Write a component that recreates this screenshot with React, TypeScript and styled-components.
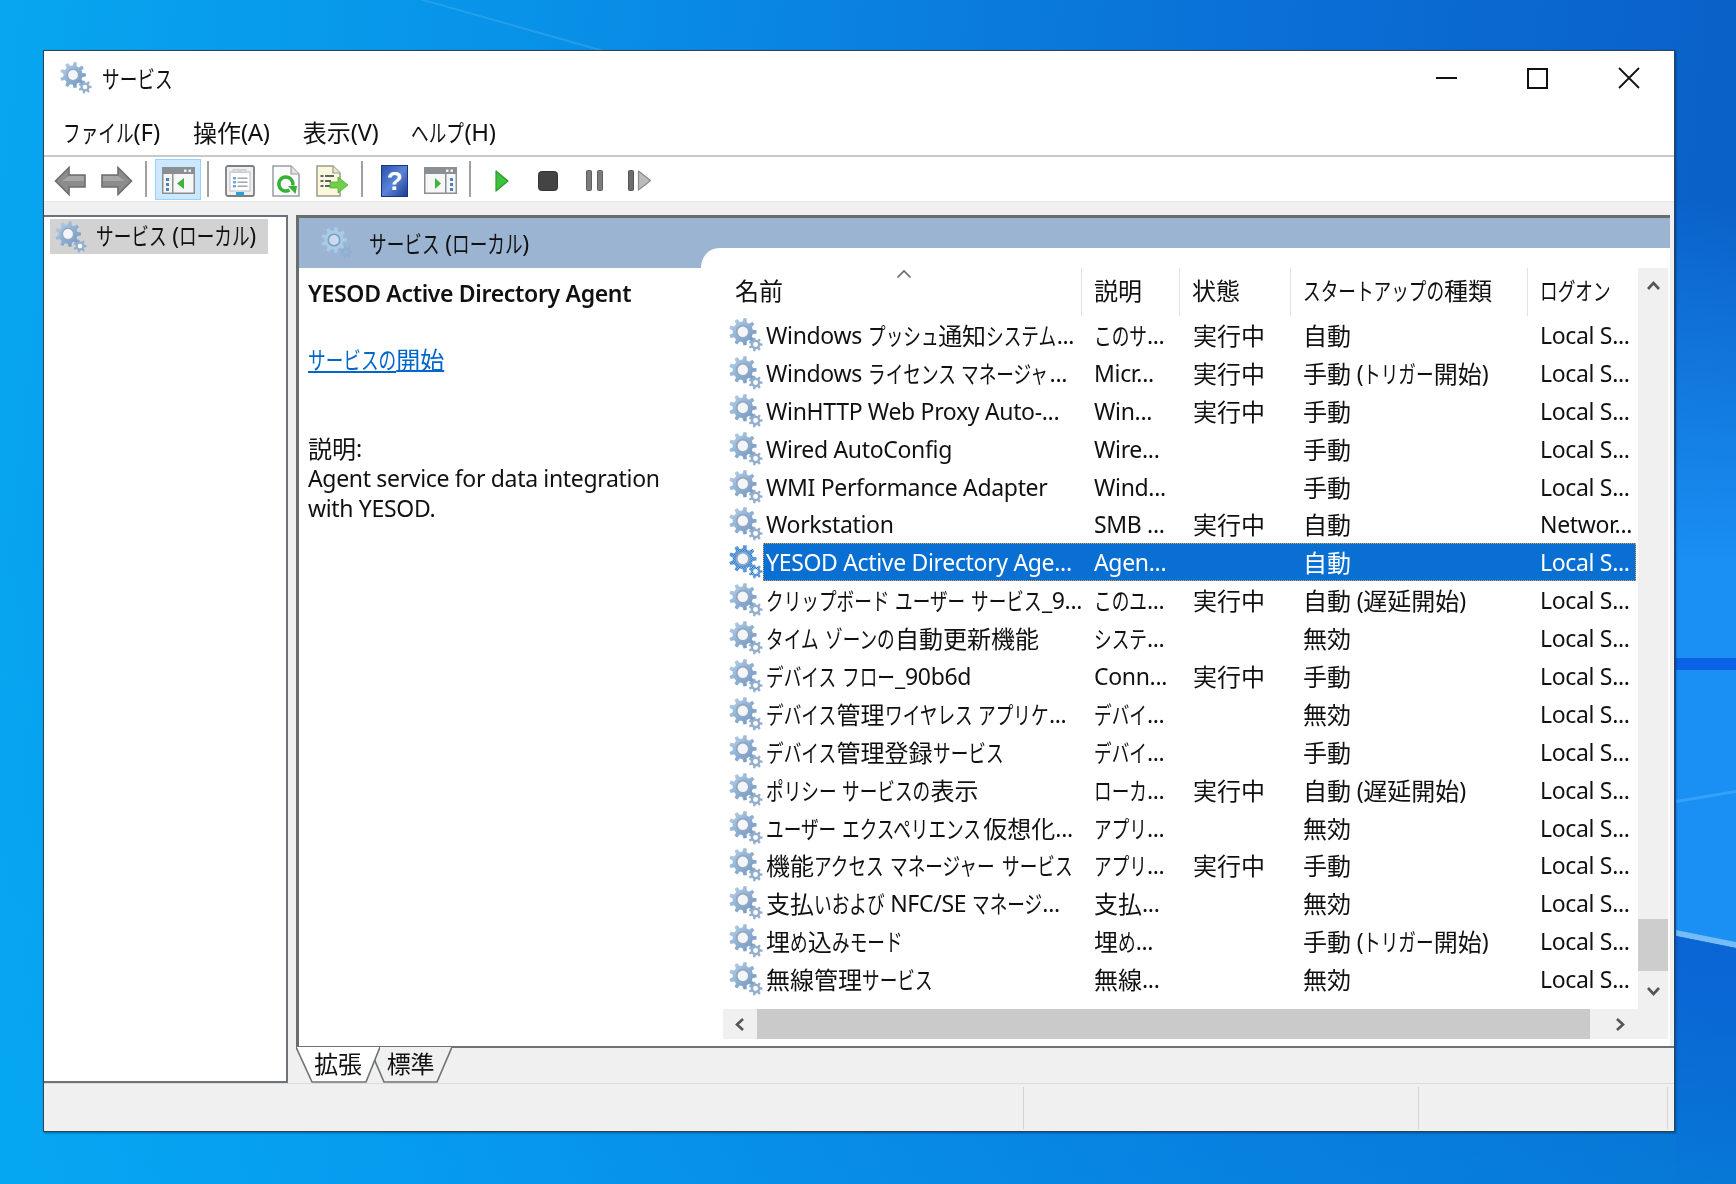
import React from 'react'
import styled, { createGlobalStyle } from 'styled-components'

const GlobalStyle = createGlobalStyle`
  html, body {
    margin: 0;
    padding: 0;
    height: 100%;
  }
  body {
    font-family: "Noto Sans", "Noto Sans CJK JP", sans-serif;
    font-size: 23px;
    letter-spacing: -0.33px;
    color: #111;
    overflow: hidden;
  }
`

const Desktop = styled.div`
  position: relative;
  width: 1736px;
  height: 1184px;
  padding: 50px 0 0 43px;
  box-sizing: border-box;
  overflow: hidden;
  background:
    linear-gradient(180deg, rgba(0, 180, 255, 0) 45%, rgba(0, 180, 255, 0.3) 100%),
    linear-gradient(96deg, #07a6f0 0%, #0892e8 28%, #0a7ede 50%, #0a6ed6 70%, #0a5ec4 100%);
`

const Wallpaper = styled.svg`
  position: absolute;
  inset: 0;
`

const Window = styled.div`
  position: relative;
  width: 1632px;
  height: 1082px;
  box-sizing: border-box;
  display: flex;
  flex-direction: column;
  background: #fff;
  border: 1px solid #2f4352;
  box-shadow: 1px 1px 2px rgba(0, 20, 60, 0.45);
  filter: blur(0.55px);
`

const TitleBar = styled.div`
  height: 56px;
  flex: none;
  display: flex;
  align-items: center;
  gap: 10px;
  padding: 0 0 2px 16px;
  box-sizing: border-box;
  font-size: 24px;
`

const TitleText = styled.span`
  flex: 1;
  padding-bottom: 2px;
`

const Caption = styled.div`
  display: flex;
  align-items: center;
`

const CaptionButton = styled.div`
  width: 91px;
  height: 44px;
  display: flex;
  align-items: center;
  justify-content: center;
`

const MenuBar = styled.div`
  flex: none;
  height: 50px;
  display: flex;
  align-items: center;
  gap: 33px;
  padding: 0 0 0 19px;
  box-sizing: border-box;
  border-bottom: 2px solid #c9c9c9;
`

const MenuItem = styled.span`
  font-size: 24px;
`

const Toolbar = styled.div`
  height: 44px;
  flex: none;
  display: flex;
  align-items: center;
  padding-left: 3px;
  border-bottom: 1px solid #e6e6e6;
`

const ToolButton = styled.div<{ $active?: boolean }>`
  width: 46px;
  height: 41px;
  box-sizing: border-box;
  padding-top: 3px;
  display: flex;
  align-items: center;
  justify-content: center;
  background: ${(p) => (p.$active ? '#cce8ff' : 'transparent')};
  border: 1px solid ${(p) => (p.$active ? '#99d1ff' : 'transparent')};
`

const ToolSep = styled.div`
  width: 2px;
  height: 36px;
  margin: 0 8px 0 6px;
  background: #a0a0a0;
`

const Main = styled.div`
  flex: 1;
  min-height: 0;
  display: flex;
  gap: 8px;
  padding-top: 13px;
  background: #f0f0f0;
`

const TreePane = styled.div`
  width: 244px;
  box-sizing: border-box;
  padding: 2px 18px 0 6px;
  background: #fff;
  border: solid #6d7378;
  border-width: 2px 2px 2px 0;
`

const TreeItem = styled.div`
  height: 35px;
  display: flex;
  align-items: center;
  gap: 9px;
  padding-left: 5px;
  white-space: nowrap;
  background: #d2d2d2;
`

const TreeLabel = styled.span`
  padding-bottom: 4px;
`

const RightColumn = styled.div`
  flex: 1;
  min-width: 0;
  display: flex;
  flex-direction: column;
`

const ContentPane = styled.div`
  flex: 1;
  min-height: 0;
  display: flex;
  margin-right: 4px;
  border: solid #6a6d70;
  border-width: 3px 0 0 3px;
`

const Details = styled.div`
  width: 402px;
  flex: none;
  background: #fff;
`

const DetailsHeader = styled.div`
  height: 50px;
  display: flex;
  align-items: center;
  gap: 16px;
  padding-left: 22px;
  white-space: nowrap;
  box-sizing: border-box;
  background: #9bb4d2;
`

const DetailsBody = styled.div`
  padding: 10px 12px 0 9px;
  line-height: 30px;
`

const ServiceName = styled.div`
  font-weight: 600;
  margin-bottom: 36px;
`

const StartLink = styled.a`
  color: #0066cc;
  text-decoration: underline;
  display: block;
  margin-bottom: 59px;
`

const ListColumn = styled.div`
  flex: 1;
  min-width: 0;
  display: flex;
  background: linear-gradient(#9bb4d2 50px, #fff 50px);
`

const ListPanel = styled.div`
  flex: 1;
  min-width: 0;
  margin-top: 30px;
  padding: 20px 2px 7px 22px;
  background: #fff;
  border-top-left-radius: 18px 20px;
  display: grid;
  grid-template-columns: 1fr 30px;
  grid-template-rows: 1fr 30px;
`

const Table = styled.div`
  min-width: 0;
  overflow: hidden;
`

const HeaderRow = styled.div`
  height: 48px;
  display: grid;
  grid-template-columns: 359px 98px 111px 237px 1fr;
`

const HeaderCell = styled.div`
  position: relative;
  display: flex;
  align-items: center;
  padding: 0 0 4px 12px;
  white-space: nowrap;
  border-right: 1px solid #e2e2e2;
  &:last-child {
    border-right: 0;
  }
`

const SortCaret = styled.svg`
  position: absolute;
  left: 173px;
  top: 1px;
`

const Row = styled.div`
  height: 37.9px;
  display: flex;
  align-items: center;
`

const RowIcon = styled.div`
  width: 40px;
  flex: none;
  display: flex;
  justify-content: flex-end;
`

const Cells = styled.div<{ $selected?: boolean }>`
  flex: none;
  width: 873px;
  height: 100%;
  box-sizing: border-box;
  display: grid;
  grid-template-columns: 328px 99px 110px 237px 1fr;
  align-items: center;
  white-space: nowrap;
  background: ${(p) => (p.$selected ? '#0a6fd2' : 'transparent')};
  color: ${(p) => (p.$selected ? '#fff' : 'inherit')};
  outline: ${(p) => (p.$selected ? '1px dotted #e8a040' : 'none')};
  outline-offset: -1px;
`

const Cell = styled.span`
  padding-left: 3px;
  overflow: hidden;
`

const VScroll = styled.div`
  background: #f0f0f0;
  display: flex;
  flex-direction: column;
  align-items: center;
`

const VThumbSpace = styled.div`
  flex: 1;
  width: 100%;
  display: flex;
  flex-direction: column;
  justify-content: flex-end;
  padding-bottom: 2px;
  box-sizing: border-box;
`

const VThumb = styled.div`
  height: 52px;
  background: #cdcdcd;
`

const ScrollArrow = styled.div`
  width: 30px;
  height: 36px;
  flex: none;
  display: flex;
  align-items: center;
  justify-content: center;
`

const HScroll = styled.div`
  background: #f0f0f0;
  display: flex;
  align-items: center;
`

const HThumb = styled.div`
  flex: 1;
  height: 100%;
  background: #cacaca;
`

const HArrowLeft = styled.div`
  width: 34px;
  height: 100%;
  flex: none;
  display: flex;
  align-items: center;
  justify-content: center;
`

const HArrowRight = styled(HArrowLeft)`
  width: 48px;
  padding-left: 10px;
  box-sizing: border-box;
`

const Corner = styled.div`
  background: #f0f0f0;
`

const TabStrip = styled.div`
  height: 37px;
  flex: none;
  display: flex;
  border-top: 2px solid #6f7275;
  box-sizing: border-box;
`

const Tab = styled.div<{ $width: number; $active?: boolean }>`
  position: relative;
  width: ${(p) => p.$width}px;
  margin-right: -11px;
  margin-top: -2px;
  padding-bottom: 4px;
  box-sizing: border-box;
  display: flex;
  align-items: center;
  justify-content: center;
  z-index: ${(p) => (p.$active ? 2 : 1)};
`

const TabShape = styled.svg`
  position: absolute;
  inset: 0;
  width: 100%;
  height: 100%;
`

const TabLabel = styled.span`
  position: relative;
  font-size: 24px;
`

const StatusBar = styled.div`
  flex: none;
  height: 48px;
  box-sizing: border-box;
  display: grid;
  grid-template-columns: 980px 395px 249px 1fr;
  padding: 3px 0 2px;
  background: #f0f0f0;
  border-top: 1px solid #dcdcdc;
`

const StatusCell = styled.div`
  border-right: 1px solid #d4d4d4;
`

// Meiryo UI draws kana much narrower than Noto does, and its kanji a bit bigger than its latin
const KANA_SCALE = 0.735

const KanaRun = styled.span<{ $chars: number }>`
  display: inline-block;
  font-size: 24px;
  width: ${(p) => p.$chars * KANA_SCALE}em;
  letter-spacing: 0;
  line-height: 1;
  vertical-align: -1px;
  white-space: pre;
  text-decoration: inherit;
  transform: scaleX(${KANA_SCALE});
  transform-origin: left center;
`

const KanjiRun = styled.span`
  font-size: 24px;
  letter-spacing: 0;
  line-height: 1;
  vertical-align: -1px;
`

const Jp: React.FC<{ children?: string }> = ({ children = '' }) => (
  <>
    {children.split(/([\u3041-\u30ff]+|[\u4e00-\u9fff]+)/).map((part, i) => {
      if (i % 2 === 0) return part
      return /^[\u3041-\u30ff]/.test(part) ? (
        <KanaRun key={i} $chars={part.length}>
          {part}
        </KanaRun>
      ) : (
        <KanjiRun key={i}>{part}</KanjiRun>
      )
    })}
  </>
)

const gearPoints = (cx: number, cy: number, ro: number, ri: number, teeth: number) => {
  const pts: string[] = []
  const step = (Math.PI * 2) / teeth
  for (let i = 0; i < teeth; i++) {
    const a = i * step
    const offs: [number, number][] = [
      [-0.3, ri],
      [-0.17, ro],
      [0.17, ro],
      [0.3, ri],
    ]
    offs.forEach(([o, r]) => {
      const t = a + o * step
      pts.push(`${(cx + Math.cos(t) * r).toFixed(2)},${(cy + Math.sin(t) * r).toFixed(2)}`)
    })
  }
  return pts.join(' ')
}

const Gear: React.FC<{ size?: number; selected?: boolean; pale?: boolean }> = ({
  size = 34,
  selected,
  pale,
}) => {
  const big = selected ? 'url(#gearSel)' : pale ? '#a9cbe4' : 'url(#gearBig)'
  const small = selected ? 'url(#gearSel)' : pale ? '#8fb0d4' : '#93afcd'
  return (
    <svg width={size} height={size} viewBox="0 0 32 32">
      <defs>
        <linearGradient id="gearBig" x1="0" y1="0" x2="1" y2="1">
          <stop offset="0" stopColor="#bdd5ea" />
          <stop offset="0.6" stopColor="#86a9d0" />
          <stop offset="1" stopColor="#7194bc" />
        </linearGradient>
        <pattern id="gearSel" width="2.4" height="2.4" patternUnits="userSpaceOnUse">
          <rect width="2.4" height="2.4" fill="#0a62c0" />
          <rect width="1.2" height="1.2" fill="#a9cdf0" />
          <rect x="1.2" y="1.2" width="1.2" height="1.2" fill="#a9cdf0" />
        </pattern>
      </defs>
      <polygon points={gearPoints(13, 13, 13, 9.6, 9)} fill={big} />
      <circle cx="13" cy="13" r="6.6" fill={pale ? '#7d9fc6' : '#94a8bd'} />
      <circle cx="13" cy="13" r="4.9" fill={pale ? '#c9dbec' : '#f2f6fa'} />
      <polygon points={gearPoints(25, 25, 6.6, 4.6, 7)} fill={small} />
      <circle cx="25" cy="25" r="2.3" fill={pale ? '#9bb4d2' : '#fff'} />
    </svg>
  )
}

const ArrowIcon: React.FC<{ flip?: boolean }> = ({ flip }) => (
  <svg width="33" height="30" viewBox="0 0 33 30" style={flip ? { transform: 'scaleX(-1)' } : undefined}>
    <path d="M15 1.5 1.5 15 15 28.5V21h16V9H15z" fill="#8c8c8c" stroke="#6e6e6e" strokeWidth="1.6" />
    <path d="M15 10h15v5H8z" fill="#a6a6a6" />
  </svg>
)

const WindowFrame: React.FC<{ children?: React.ReactNode }> = ({ children }) => (
  <svg width="33" height="27" viewBox="0 0 33 27">
    <rect x="0.75" y="0.75" width="31.5" height="25.5" fill="#f7f7f7" stroke="#8a8f94" strokeWidth="1.5" />
    <rect x="1" y="1" width="31" height="6" fill="#8a8f94" />
    <rect x="22" y="2.5" width="2.5" height="2.5" fill="#eee" />
    <rect x="26.5" y="2.5" width="2.5" height="2.5" fill="#eee" />
    {children}
  </svg>
)

const DotColumn: React.FC<{ x: number }> = ({ x }) => (
  <g fill="#4f81bd">
    <rect x={x} y="11" width="3" height="3" />
    <rect x={x} y="16" width="3" height="3" />
    <rect x={x} y="21" width="3" height="3" />
  </g>
)

const PanelLeftIcon = () => (
  <WindowFrame>
    <rect x="10" y="7" width="1.5" height="19" fill="#8a8f94" />
    <DotColumn x={4} />
    <path d="M22 11v11l-7-5.5z" fill="#3db33d" />
  </WindowFrame>
)

const PanelRightIcon = () => (
  <WindowFrame>
    <rect x="21" y="7" width="1.5" height="19" fill="#8a8f94" />
    <DotColumn x={26} />
    <path d="M11 11v11l6-5.5z" fill="#3db33d" />
  </WindowFrame>
)

const PropertiesIcon = () => (
  <svg width="30" height="32" viewBox="0 0 30 32">
    <rect x="1" y="1" width="28" height="30" rx="2" fill="#f0f0f0" stroke="#7a7f84" strokeWidth="1.8" />
    <rect x="5" y="7" width="20" height="19" fill="#fff" stroke="#b9bec4" />
    <rect x="8" y="4.5" width="6" height="3" fill="#d8dce0" stroke="#b9bec4" strokeWidth="0.6" />
    <rect x="15" y="4.5" width="6" height="3" fill="#d8dce0" stroke="#b9bec4" strokeWidth="0.6" />
    <rect x="8" y="12" width="3" height="2.4" fill="#6aa5d8" />
    <rect x="8" y="16" width="3" height="2.4" fill="#6aa5d8" />
    <rect x="8" y="20" width="3" height="2.4" fill="#6aa5d8" />
    <rect x="12.5" y="12.5" width="10" height="1.4" fill="#9aa0a6" />
    <rect x="12.5" y="16.5" width="10" height="1.4" fill="#9aa0a6" />
    <rect x="12.5" y="20.5" width="10" height="1.4" fill="#9aa0a6" />
    <rect x="11" y="27" width="8" height="3" fill="#27a2e0" />
  </svg>
)

const RefreshIcon = () => (
  <svg width="28" height="32" viewBox="0 0 28 32">
    <path d="M1 1h18l8 8v22H1z" fill="#fbfbfb" stroke="#9a9ea2" strokeWidth="1.5" />
    <path d="M19 1v8h8" fill="#e2e2e2" stroke="#9a9ea2" strokeWidth="1.2" />
    <path d="M17.5 25a7 7 0 1 1 3.2-4.5" fill="none" stroke="#35b035" strokeWidth="3.4" />
    <path d="M16 21h9l-1.5 8z" fill="#35b035" />
  </svg>
)

const ExportIcon = () => (
  <svg width="33" height="32" viewBox="0 0 33 32">
    <path d="M1 1h16l7 7v23H1z" fill="#fbf8dc" stroke="#9a9a8a" strokeWidth="1.5" />
    <path d="M17 1v7h7" fill="#e6e6d8" stroke="#9a9a8a" strokeWidth="1.2" />
    <g fill="#5c6468">
      <rect x="4.5" y="10" width="3" height="2" />
      <rect x="9" y="10" width="9" height="2" />
      <rect x="4.5" y="15" width="3" height="2" />
      <rect x="9" y="15" width="6" height="2" />
      <rect x="4.5" y="20" width="3" height="2" />
      <rect x="9" y="20" width="5" height="2" />
    </g>
    <path d="M14 17h8v-5l10 8-10 8v-5h-8z" fill="#6fcf4a" stroke="#4fae32" strokeWidth="0.8" />
  </svg>
)

const HelpIcon = () => (
  <svg width="27" height="32" viewBox="0 0 27 32">
    <defs>
      <linearGradient id="helpFill" x1="0" y1="0" x2="1" y2="1">
        <stop offset="0" stopColor="#2b4ea8" />
        <stop offset="0.5" stopColor="#5a84d8" />
        <stop offset="1" stopColor="#1d3a90" />
      </linearGradient>
    </defs>
    <rect x="0.5" y="0.5" width="26" height="31" fill="url(#helpFill)" stroke="#1c3580" />
    <text x="13.5" y="25" textAnchor="middle" fontSize="26" fontWeight="700" fill="#fff" fontFamily="Liberation Sans, sans-serif">
      ?
    </text>
  </svg>
)

const PlayIcon = () => (
  <svg width="14" height="22" viewBox="0 0 14 22">
    <path d="M1 1l12 10L1 21z" fill="#3fc03f" stroke="#2a9a2a" strokeWidth="1.2" strokeLinejoin="round" />
  </svg>
)

const StopIcon = () => (
  <svg width="20" height="20" viewBox="0 0 20 20">
    <rect x="0.5" y="0.5" width="19" height="19" rx="3" fill="#444" stroke="#333" />
  </svg>
)

const PauseIcon = () => (
  <svg width="17" height="21" viewBox="0 0 17 21">
    <rect x="0.5" y="0.5" width="5" height="20" rx="1" fill="#7c7c7c" stroke="#5f5f5f" />
    <rect x="11.5" y="0.5" width="5" height="20" rx="1" fill="#7c7c7c" stroke="#5f5f5f" />
  </svg>
)

const ResumeIcon = () => (
  <svg width="24" height="21" viewBox="0 0 24 21">
    <rect x="0.5" y="0.5" width="5" height="20" rx="1" fill="#6c6c6c" stroke="#555" />
    <path d="M10.5 1l12 9.5-12 9.5z" fill="#bcbcbc" stroke="#8a8a8a" strokeWidth="1.2" strokeLinejoin="round" />
  </svg>
)

const Chevron: React.FC<{ dir: 'up' | 'down' | 'left' | 'right' }> = ({ dir }) => {
  const paths = {
    up: 'M2 10 7.5 4 13 10',
    down: 'M2 4 7.5 10 13 4',
    left: 'M10 2 4 7.5 10 13',
    right: 'M5 2 11 7.5 5 13',
  }
  return (
    <svg width="15" height="15" viewBox="0 0 15 15">
      <path d={paths[dir]} fill="none" stroke="#555" strokeWidth="2.6" />
    </svg>
  )
}

type Service = {
  name: string
  desc: string
  status?: string
  startup: string
  logon?: string
  selected?: boolean
}

const RUNNING = '実行中'
const LOCAL = 'Local S...'

const services: ReadonlyArray<Service> = [
  { name: 'Windows プッシュ通知システム...', desc: 'このサ...', status: RUNNING, startup: '自動' },
  { name: 'Windows ライセンス マネージャ...', desc: 'Micr...', status: RUNNING, startup: '手動 (トリガー開始)' },
  { name: 'WinHTTP Web Proxy Auto-...', desc: 'Win...', status: RUNNING, startup: '手動' },
  { name: 'Wired AutoConfig', desc: 'Wire...', startup: '手動' },
  { name: 'WMI Performance Adapter', desc: 'Wind...', startup: '手動' },
  { name: 'Workstation', desc: 'SMB ...', status: RUNNING, startup: '自動', logon: 'Networ...' },
  { name: 'YESOD Active Directory Age...', desc: 'Agen...', startup: '自動', selected: true },
  { name: 'クリップボード ユーザー サービス_9...', desc: 'このユ...', status: RUNNING, startup: '自動 (遅延開始)' },
  { name: 'タイム ゾーンの自動更新機能', desc: 'システ...', startup: '無効' },
  { name: 'デバイス フロー_90b6d', desc: 'Conn...', status: RUNNING, startup: '手動' },
  { name: 'デバイス管理ワイヤレス アプリケ...', desc: 'デバイ...', startup: '無効' },
  { name: 'デバイス管理登録サービス', desc: 'デバイ...', startup: '手動' },
  { name: 'ポリシー サービスの表示', desc: 'ローカ...', status: RUNNING, startup: '自動 (遅延開始)' },
  { name: 'ユーザー エクスペリエンス仮想化...', desc: 'アプリ...', startup: '無効' },
  { name: '機能アクセス マネージャー サービス', desc: 'アプリ...', status: RUNNING, startup: '手動' },
  { name: '支払いおよび NFC/SE マネージ...', desc: '支払...', startup: '無効' },
  { name: '埋め込みモード', desc: '埋め...', startup: '手動 (トリガー開始)' },
  { name: '無線管理サービス', desc: '無線...', startup: '無効' },
]

const App: React.FC = () => (
  <Desktop>
    <GlobalStyle />
    <Wallpaper width="1736" height="1184" viewBox="0 0 1736 1184">
      <defs>
        <linearGradient id="rightGlow" x1="0" y1="0" x2="0" y2="1">
          <stop offset="0" stopColor="#1a90f5" stopOpacity="0" />
          <stop offset="0.5" stopColor="#1a90f5" />
          <stop offset="1" stopColor="#1a90f5" />
        </linearGradient>
        <linearGradient id="rightShade" x1="0" y1="0" x2="0" y2="1">
          <stop offset="0" stopColor="#0a62d6" stopOpacity="0.85" />
          <stop offset="1" stopColor="#0a62d6" stopOpacity="0" />
        </linearGradient>
      </defs>
      <path d="M420 0 426 0 604 50 596 50z" fill="#fff" opacity="0.12" />
      <path d="M1676 200H1736V942L1676 930z" fill="url(#rightGlow)" />
      <rect x="1676" y="658" width="60" height="12" fill="#0a62e6" />
      <path d="M1676 800 1736 790V793L1676 803z" fill="#4fb4ff" opacity="0.5" />
      <path d="M1676 930 1736 942V948L1676 936z" fill="#8fd0ff" opacity="0.8" />
      <path d="M1676 936 1736 948V1184H1676z" fill="url(#rightShade)" />
    </Wallpaper>
    <Window>
      <TitleBar>
        <Gear size={32} />
        <TitleText>
          <Jp>サービス</Jp>
        </TitleText>
        <Caption>
          <CaptionButton>
            <svg width="21" height="4" viewBox="0 0 21 4">
              <rect y="1" width="21" height="2" fill="#111" />
            </svg>
          </CaptionButton>
          <CaptionButton>
            <svg width="21" height="21" viewBox="0 0 21 21">
              <rect x="1" y="1" width="19" height="19" fill="none" stroke="#111" strokeWidth="2" />
            </svg>
          </CaptionButton>
          <CaptionButton>
            <svg width="22" height="22" viewBox="0 0 22 22">
              <path d="M1 1 21 21M21 1 1 21" fill="none" stroke="#111" strokeWidth="1.8" />
            </svg>
          </CaptionButton>
        </Caption>
      </TitleBar>
      <MenuBar>
        <MenuItem>
          <Jp>ファイル(F)</Jp>
        </MenuItem>
        <MenuItem>
          <Jp>操作(A)</Jp>
        </MenuItem>
        <MenuItem>
          <Jp>表示(V)</Jp>
        </MenuItem>
        <MenuItem>
          <Jp>ヘルプ(H)</Jp>
        </MenuItem>
      </MenuBar>
      <Toolbar>
        <ToolButton>
          <ArrowIcon />
        </ToolButton>
        <ToolButton>
          <ArrowIcon flip />
        </ToolButton>
        <ToolSep />
        <ToolButton $active>
          <PanelLeftIcon />
        </ToolButton>
        <ToolSep />
        <ToolButton>
          <PropertiesIcon />
        </ToolButton>
        <ToolButton>
          <RefreshIcon />
        </ToolButton>
        <ToolButton>
          <ExportIcon />
        </ToolButton>
        <ToolSep />
        <ToolButton>
          <HelpIcon />
        </ToolButton>
        <ToolButton>
          <PanelRightIcon />
        </ToolButton>
        <ToolSep />
        <ToolButton>
          <PlayIcon />
        </ToolButton>
        <ToolButton>
          <StopIcon />
        </ToolButton>
        <ToolButton>
          <PauseIcon />
        </ToolButton>
        <ToolButton>
          <ResumeIcon />
        </ToolButton>
      </Toolbar>
      <Main>
        <TreePane>
          <TreeItem>
            <Gear size={32} />
            <TreeLabel>
              <Jp>サービス (ローカル)</Jp>
            </TreeLabel>
          </TreeItem>
        </TreePane>
        <RightColumn>
          <ContentPane>
            <Details>
              <DetailsHeader>
                <Gear size={32} pale />
                <span>
                  <Jp>サービス (ローカル)</Jp>
                </span>
              </DetailsHeader>
              <DetailsBody>
                <ServiceName>YESOD Active Directory Agent</ServiceName>
                <StartLink>
                  <Jp>サービスの開始</Jp>
                </StartLink>
                <div>
                  <Jp>説明:</Jp>
                </div>
                <div>Agent service for data integration</div>
                <div>with YESOD.</div>
              </DetailsBody>
            </Details>
            <ListColumn>
              <ListPanel>
                <Table>
                  <HeaderRow>
                    <HeaderCell>
                      <span>
                        <Jp>名前</Jp>
                      </span>
                      <SortCaret width="16" height="10" viewBox="0 0 16 10">
                        <path d="M1.5 8.5 8 2l6.5 6.5" fill="none" stroke="#6a6a6a" strokeWidth="1.6" />
                      </SortCaret>
                    </HeaderCell>
                    <HeaderCell>
                      <span>
                        <Jp>説明</Jp>
                      </span>
                    </HeaderCell>
                    <HeaderCell>
                      <span>
                        <Jp>状態</Jp>
                      </span>
                    </HeaderCell>
                    <HeaderCell>
                      <span>
                        <Jp>スタートアップの種類</Jp>
                      </span>
                    </HeaderCell>
                    <HeaderCell>
                      <span>
                        <Jp>ログオン</Jp>
                      </span>
                    </HeaderCell>
                  </HeaderRow>
                  {services.map((s) => (
                    <Row key={s.name}>
                      <RowIcon>
                        <Gear selected={s.selected} />
                      </RowIcon>
                      <Cells $selected={s.selected}>
                        <Cell>
                          <Jp>{s.name}</Jp>
                        </Cell>
                        <Cell>
                          <Jp>{s.desc}</Jp>
                        </Cell>
                        <Cell>
                          <Jp>{s.status}</Jp>
                        </Cell>
                        <Cell>
                          <Jp>{s.startup}</Jp>
                        </Cell>
                        <Cell>{s.logon ?? LOCAL}</Cell>
                      </Cells>
                    </Row>
                  ))}
                </Table>
                <VScroll>
                  <ScrollArrow>
                    <Chevron dir="up" />
                  </ScrollArrow>
                  <VThumbSpace>
                    <VThumb />
                  </VThumbSpace>
                  <ScrollArrow>
                    <Chevron dir="down" />
                  </ScrollArrow>
                </VScroll>
                <HScroll>
                  <HArrowLeft>
                    <Chevron dir="left" />
                  </HArrowLeft>
                  <HThumb />
                  <HArrowRight>
                    <Chevron dir="right" />
                  </HArrowRight>
                </HScroll>
                <Corner />
              </ListPanel>
            </ListColumn>
          </ContentPane>
          <TabStrip>
            <Tab $width={84} $active>
              <TabShape viewBox="0 0 84 37" preserveAspectRatio="none">
                <polygon points="0,1 84,1 70,36 16,36" fill="#fff" />
                <path d="M0 1 16 36H70L84 1" fill="none" stroke="#6f7275" strokeWidth="1.6" />
              </TabShape>
              <TabLabel>拡張</TabLabel>
            </Tab>
            <Tab $width={83}>
              <TabShape viewBox="0 0 83 37" preserveAspectRatio="none">
                <polygon points="0,1 83,1 68,36 15,36" fill="#f0f0f0" />
                <path d="M0 1 15 36H68L83 1" fill="none" stroke="#6f7275" strokeWidth="1.6" />
              </TabShape>
              <TabLabel>標準</TabLabel>
            </Tab>
          </TabStrip>
        </RightColumn>
      </Main>
      <StatusBar>
        <StatusCell />
        <StatusCell />
        <StatusCell />
      </StatusBar>
    </Window>
  </Desktop>
)

export default App
